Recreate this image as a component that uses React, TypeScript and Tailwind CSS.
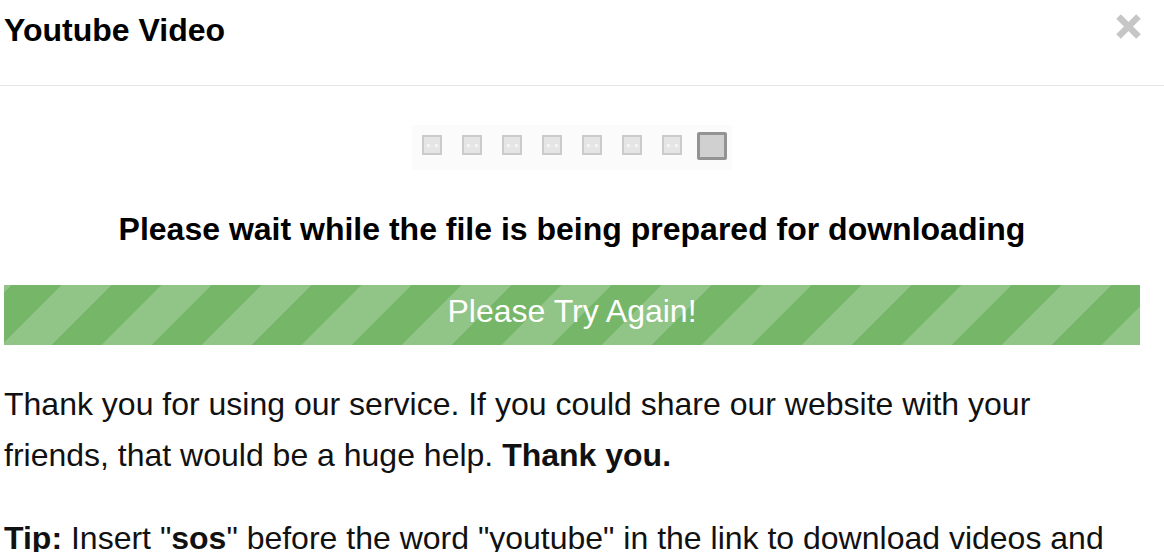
function Square({ big }: { big?: boolean }) {
  if (big) {
    return <div className="w-[30px] h-[28px] border-[3px] border-[#939393] bg-[#d0d0d0] rounded-[2px]" />;
  }
  return (
    <div className="w-[20px] h-[20px] border-2 border-[#cbcbcb] bg-[#e5e5e5] flex items-center justify-center gap-[5px]">
      <span className="w-[3px] h-[3px] bg-[#f4f4f4]" />
      <span className="w-[3px] h-[3px] bg-[#f4f4f4]" />
    </div>
  );
}

export default function App() {
  return (
    <div
      className="h-[552px] w-[1164px] overflow-hidden bg-white text-[#111]"
      style={{ fontFamily: '"Liberation Sans", Arial, sans-serif' }}
    >
      {/* Modal header */}
      <div className="relative h-[86px] border-b border-[#e5e5e5] pl-[4px] pt-[12px]">
        <h4 className="text-[32px] leading-[36px] font-bold text-black">Youtube Video</h4>
        <button className="absolute right-[23px] top-[14px] w-[25px] h-[25px]" aria-label="Close">
          <svg viewBox="0 0 25 25" className="w-[25px] h-[25px]">
            <path d="M2.5 2.5 22.5 22.5M22.5 2.5 2.5 22.5" stroke="#c6c6c6" strokeWidth="6.5" strokeLinecap="butt" />
          </svg>
        </button>
      </div>

      {/* Modal body */}
      <div className="pl-[4px] pr-[24px]">
        {/* Loader */}
        <div className="flex justify-center mt-[39px]">
          <div className="flex w-[320px] h-[45px] bg-[#fafbfa]">
            {[0, 1, 2, 3, 4, 5, 6].map((i) => (
              <div key={i} className="w-[40px] flex justify-center pt-[10px]">
                <Square />
              </div>
            ))}
            <div className="w-[40px] flex justify-center pt-[7px]">
              <Square big />
            </div>
          </div>
        </div>

        <p className="mt-[39px] text-center text-[32px] leading-[40px] font-bold text-black">
          Please wait while the file is being prepared for downloading
        </p>

        {/* Striped progress bar */}
        <div
          className="mt-[36px] h-[60px] bg-[#76b668] text-center text-white text-[32px] leading-[52px]"
          style={{
            backgroundImage:
              "linear-gradient(135deg, #90c587 25%, transparent 25%, transparent 50%, #90c587 50%, #90c587 75%, transparent 75%, transparent)",
            backgroundSize: "100px 100px",
            backgroundPosition: "58px 0",
          }}
        >
          Please Try Again!
        </div>

        <p className="mt-[34px] text-[32px] leading-[51px]">
          Thank you for using our service. If you could share our website with your friends, that would be a huge
          help. <b>Thank you.</b>
        </p>

        <p className="mt-[32px] text-[32px] leading-[51px]">
          <b>Tip:</b> Insert "<b>sos</b>" before the word "youtube" in the link to download videos and mp3 from
          YouTube.
        </p>
      </div>
    </div>
  );
}
